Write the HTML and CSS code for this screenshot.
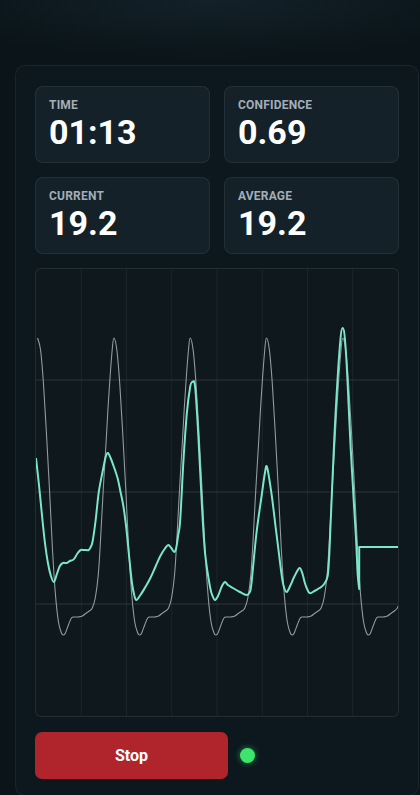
FILE: index.html
```html
<!DOCTYPE html>
<html lang="en">
<head>
  <meta charset="UTF-8">
  <title>Pulse Monitor</title>
  <meta name="viewport" content="width=device-width, initial-scale=1.0">
  <link rel="stylesheet" href="styles.css">
</head>
<body>
  <div class="panel">
    <div class="stats">
      <div class="stat">
        <div class="stat-label">TIME</div>
        <div class="stat-value">01:13</div>
      </div>
      <div class="stat">
        <div class="stat-label">CONFIDENCE</div>
        <div class="stat-value">0.69</div>
      </div>
      <div class="stat">
        <div class="stat-label">CURRENT</div>
        <div class="stat-value">19.2</div>
      </div>
      <div class="stat">
        <div class="stat-label">AVERAGE</div>
        <div class="stat-value">19.2</div>
      </div>
    </div>

    <div class="chart">
      <svg id="grafico" viewBox="0 0 364 447" preserveAspectRatio="none">
        <g id="grade"></g>
        <path id="linhaBruta" class="raw-line" d=""></path>
        <path id="linhaFiltro" class="filtered-line" d=""></path>
      </svg>
    </div>

    <div class="controls">
      <button type="button" class="btn-stop">Stop</button>
      <span class="status-dot"></span>
    </div>
  </div>

  <script>
    // chart area starts at x=35, y=269 on the page
    const OX = 35, OY = 269;

    function desenharGrade() {
      const grade = document.getElementById('grade');
      let html = '';
      for (let i = 1; i < 8; i++) {
        const x = i * 45.5;
        html += `<line class="grid-v" x1="${x}" y1="0" x2="${x}" y2="447"></line>`;
      }
      for (let j = 1; j < 4; j++) {
        const y = j * 112 - 1;
        html += `<line class="grid-h" x1="0" y1="${y}" x2="364" y2="${y}"></line>`;
      }
      grade.innerHTML = html;
    }

    // curva suave (catmull-rom) passando pelos pontos
    function curva(lista) {
      const p = lista.map(q => [q[0] - OX, q[1] - OY]);
      let d = `M${p[0][0].toFixed(1)},${p[0][1].toFixed(1)}`;
      for (let i = 0; i < p.length - 1; i++) {
        const p0 = p[i - 1] || p[i];
        const p1 = p[i];
        const p2 = p[i + 1];
        const p3 = p[i + 2] || p2;
        const c1x = p1[0] + (p2[0] - p0[0]) / 6;
        const c1y = p1[1] + (p2[1] - p0[1]) / 6;
        const c2x = p2[0] - (p3[0] - p1[0]) / 6;
        const c2y = p2[1] - (p3[1] - p1[1]) / 6;
        d += ` C${c1x.toFixed(1)},${c1y.toFixed(1)} ${c2x.toFixed(1)},${c2y.toFixed(1)} ${p2[0].toFixed(1)},${p2[1].toFixed(1)}`;
      }
      return d;
    }

    function desenharBruta() {
      const batida = [
        [0, 338], [3, 350], [6, 385], [9, 435], [12, 490], [15, 550], [18, 595],
        [21, 622], [24, 633], [26, 635], [28, 633], [31, 625], [34, 618], [37, 617],
        [41, 617], [45, 616], [49, 613], [52, 611], [55, 608], [58, 598], [61, 575],
        [63, 545], [66, 490], [69, 440], [71, 405], [73, 375], [75, 350]
      ];
      const lista = [];
      for (let k = 0; k < 5; k++) {
        const pico = 36.6 + k * 76.7;
        batida.forEach(b => {
          if (pico + b[0] <= 399) lista.push([pico + b[0], b[1]]);
        });
      }
      lista.push([399, 606]);
      document.getElementById('linhaBruta').setAttribute('d', curva(lista));
    }

    function desenharFiltro() {
      const lista = [
        [35, 458], [38, 485], [41, 515], [44, 543], [47, 563], [50, 576], [53, 582],
        [56, 574], [59, 566], [62, 563], [66, 563], [69, 561], [72, 560], [74, 558],
        [77, 553], [80, 550], [84, 550], [88, 550], [90, 547], [92, 541], [95, 520],
        [98, 493], [101.7, 473], [105, 457], [107.3, 453], [110, 458], [113, 466],
        [117, 478], [120, 492], [123, 507], [126, 530], [128.5, 555], [131.5, 583],
        [134, 596], [136, 600], [140, 595], [145, 587], [150, 578], [155, 567],
        [160, 556], [165, 548], [168, 545], [171, 548], [174, 552], [176, 548],
        [178, 535], [180, 520], [183.3, 460], [186.7, 413], [190, 387], [192.3, 382],
        [195, 387], [198.3, 437], [201.7, 503], [205, 553], [210, 587], [213, 597],
        [215, 600], [218, 596], [222, 586], [225, 582], [228, 585], [233, 588],
        [240, 592], [246.7, 595], [250, 592], [251.7, 583], [256.7, 533],
        [261.7, 497], [265, 474], [267.3, 467], [271.7, 493], [276.7, 533],
        [281.7, 573], [284, 586], [287, 592], [291, 585], [295, 576], [300, 568],
        [303, 574], [306, 585], [310, 593], [315, 591], [320, 588], [324, 585],
        [328, 577], [330, 553], [335, 437], [340, 353], [343.3, 328], [346.7, 353],
        [351.7, 453], [356.7, 537], [358.5, 575], [360, 589]
      ];
      const d = curva(lista) + ` L${360 - OX},${547 - OY} L${399 - OX},${547 - OY}`;
      document.getElementById('linhaFiltro').setAttribute('d', d);
    }

    desenharGrade();
    desenharBruta();
    desenharFiltro();
  </script>
</body>
</html>
```

FILE: styles.css
```css
* {
  margin: 0;
  padding: 0;
  box-sizing: border-box;
}

body {
  font-family: Roboto, "Liberation Sans", Arial, sans-serif;
  background-color: #0a1419;
  background-image: radial-gradient(ellipse 70% 60px at 50% 0, #132128 0%, rgba(10, 20, 25, 0) 100%);
  min-height: 100vh;
  padding: 65px 0 0 15px;
}

.panel {
  width: 404px;
  background-color: #0c181e;
  border: 1px solid rgba(255, 255, 255, 0.06);
  border-radius: 10px;
  padding: 20px 19px 16px 19px;
}

.stats {
  display: grid;
  grid-template-columns: 1fr 1fr;
  gap: 14px;
}

.stat {
  height: 77px;
  background-color: #142129;
  border: 1px solid rgba(255, 255, 255, 0.07);
  border-radius: 8px;
  padding: 11px 13px;
}

.stat-label {
  font-size: 12px;
  font-weight: 700;
  color: #a3aeb6;
  letter-spacing: 0.2px;
  line-height: 14px;
}

.stat-value {
  font-size: 34px;
  font-weight: 700;
  color: #ffffff;
  line-height: 40px;
}

.chart {
  margin-top: 14px;
  height: 449px;
  background-color: #0f191d;
  border: 1px solid rgba(255, 255, 255, 0.09);
  border-radius: 6px;
  overflow: hidden;
}

.chart svg {
  display: block;
  width: 100%;
  height: 100%;
}

.grid-v {
  stroke: rgba(255, 255, 255, 0.06);
  stroke-width: 1;
}

.grid-h {
  stroke: rgba(255, 255, 255, 0.12);
  stroke-width: 1;
}

.raw-line {
  fill: none;
  stroke: #b4bcc0;
  stroke-opacity: 0.8;
  stroke-width: 1.1;
  stroke-linejoin: round;
}

.filtered-line {
  fill: none;
  stroke: #7be6ca;
  stroke-width: 2;
  stroke-linejoin: round;
}

.controls {
  margin-top: 15px;
  display: flex;
  align-items: center;
  gap: 12px;
}

.btn-stop {
  width: 193px;
  height: 47px;
  background-color: #b0252c;
  color: #ffffff;
  border: none;
  border-radius: 7px;
  font-family: inherit;
  font-size: 16px;
  font-weight: 700;
  cursor: pointer;
}

.status-dot {
  width: 15px;
  height: 15px;
  border-radius: 50%;
  background-color: #3ee56c;
  box-shadow: 0 0 6px rgba(62, 229, 108, 0.55);
}
```
